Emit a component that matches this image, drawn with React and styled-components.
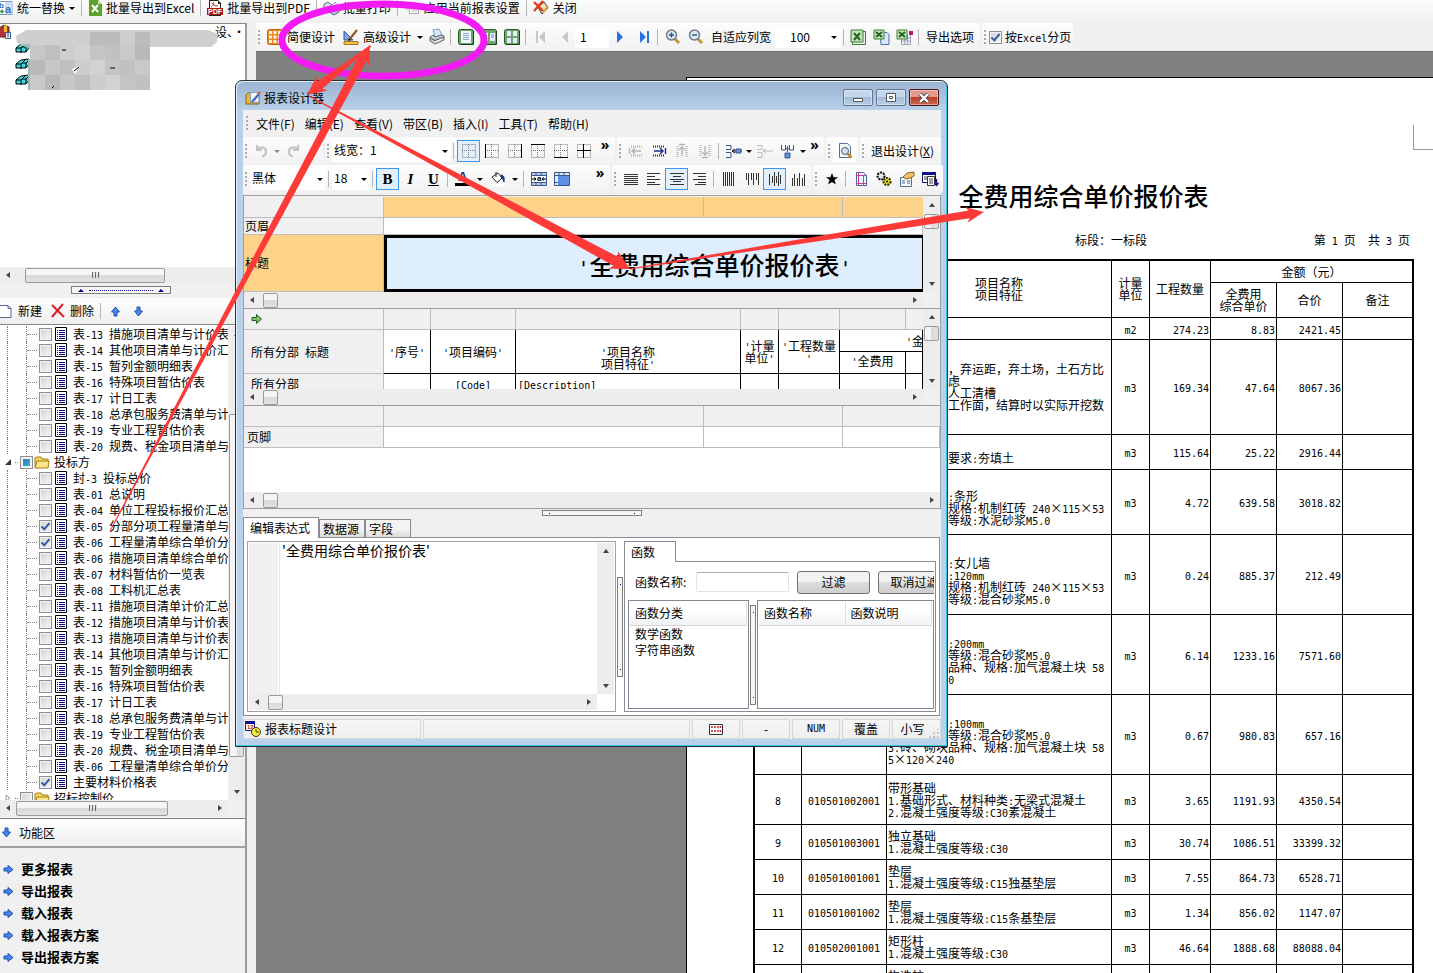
import React from 'react'
import styled, { createGlobalStyle, css } from 'styled-components'

const cjk = "'Noto Sans CJK SC', 'Open Sans', sans-serif"

const GlobalStyle = createGlobalStyle`
  *, *::before, *::after {
    box-sizing: border-box;
  }
  body {
    margin: 0;
    background: #f0f0f0;
    color: #000;
    font: 12px/16px ${cjk};
    overflow: hidden;
  }
  button, input, select, textarea {
    margin: 0;
    padding: 0;
    font: inherit;
    color: inherit;
  }
  ul {
    margin: 0;
    padding: 0;
    list-style: none;
  }
`

/* ---------- data ---------- */

const bidForms = [
  ['表-13 措施项目清单与计价表'],
  ['表-14 其他项目清单与计价汇'],
  ['表-15 暂列金额明细表'],
  ['表-16 特殊项目暂估价表'],
  ['表-17 计日工表'],
  ['表-18 总承包服务费清单与计'],
  ['表-19 专业工程暂估价表'],
  ['表-20 规费、税金项目清单与'],
]

const bidderForms = [
  ['封-3 投标总价'],
  ['表-01 总说明'],
  ['表-04 单位工程投标报价汇总'],
  ['表-05 分部分项工程量清单与', true],
  ['表-06 工程量清单综合单价分', true],
  ['表-06 措施项目清单综合单价'],
  ['表-07 材料暂估价一览表'],
  ['表-08 工料机汇总表'],
  ['表-11 措施项目清单计价汇总'],
  ['表-12 措施项目清单与计价表'],
  ...bidForms,
  ['表-06 工程量清单综合单价分'],
  ['主要材料价格表', true],
]

const reportRows = [
  { h: 22, no: '1', code: '010101001001', desc: '平整场地', unit: 'm2', n: ['274.23', '8.83', '2421.45'] },
  { h: 95, no: '2', code: '010101003001', desc: '挖沟槽土方\n2.土方外运，弃运距，弃土场，土石方比\n例各自行考虑\n3.开挖方式人工清槽\n4.不另计算工作面，结算时以实际开挖数\n量为准', unit: 'm3', n: ['169.34', '47.64', '8067.36'] },
  { h: 35, no: '3', code: '010103001001', desc: '回填方\n1.压实密度要求:夯填土', unit: 'm3', n: ['115.64', '25.22', '2916.44'] },
  { h: 65, no: '4', code: '010401001001', desc: '砖基础\n1.基础类型:条形\n2.品种型号规格:机制红砖 240×115×53\n3.砂浆强度等级:水泥砂浆M5.0', unit: 'm3', n: ['4.72', '639.58', '3018.82'] },
  { h: 80, no: '5', code: '010401003001', desc: '实心砖墙\n1.墙体类型:女儿墙\n2.墙体厚度:120mm\n3.品种型号规格:机制红砖 240×115×53\n4.砂浆强度等级:混合砂浆M5.0', unit: 'm3', n: ['0.24', '885.37', '212.49'] },
  { h: 80, no: '6', code: '010402001001', desc: '砌块墙\n1.墙体厚度:200mm\n2.砂浆强度等级:混合砂浆M5.0\n3.砖、砌块品种、规格:加气混凝土块 58\n5×120×240', unit: 'm3', n: ['6.14', '1233.16', '7571.60'] },
  { h: 80, no: '7', code: '010402001002', desc: '砌块墙\n1.墙体厚度:100mm\n2.砂浆强度等级:混合砂浆M5.0\n3.砖、砌块品种、规格:加气混凝土块 58\n5×120×240', unit: 'm3', n: ['0.67', '980.83', '657.16'] },
  { h: 50, no: '8', code: '010501002001', desc: '带形基础\n1.基础形式、材料种类:无梁式混凝土\n2.混凝土强度等级:C30素混凝土', unit: 'm3', n: ['3.65', '1191.93', '4350.54'] },
  { h: 35, no: '9', code: '010501003001', desc: '独立基础\n1.混凝土强度等级:C30', unit: 'm3', n: ['30.74', '1086.51', '33399.32'] },
  { h: 35, no: '10', code: '010501001001', desc: '垫层\n1.混凝土强度等级:C15独基垫层', unit: 'm3', n: ['7.55', '864.73', '6528.71'] },
  { h: 35, no: '11', code: '010501001002', desc: '垫层\n1.混凝土强度等级:C15条基垫层', unit: 'm3', n: ['1.34', '856.02', '1147.07'] },
  { h: 35, no: '12', code: '010502001001', desc: '矩形柱\n1.混凝土强度等级:C30', unit: 'm3', n: ['46.64', '1888.68', '88088.04'] },
  { h: 35, no: '13', code: '010502002001', desc: '构造柱\n1.混凝土强度等级:C25', unit: 'm3', n: ['5.31', '1902.11', '10100.20'] },
]

/* ---------- text ---------- */

const Mono = styled.span`
  font-family: 'DejaVu Sans Mono', monospace;
  font-size: ${p => p.$size || 10}px;
  line-height: 0;
`
const Times = styled.span`
  display: inline-block;
  width: 12px;
  text-align: center;
`

// latin runs take half the width of a han character
const Text = ({ children, size }) =>
  String(children).split(/([\x20-\x7e]+|×)/).map((part, i) => {
    if (part === '×') return <Times key={i}>×</Times>
    return i % 2 ? <Mono key={i} $size={size}>{part}</Mono> : part
  })

/* ---------- icons ---------- */

const Svg = styled.svg`
  display: block;
  flex: none;
  overflow: visible;
`
const IconText = styled.text`
  font: 700 ${p => p.$size}px/1 'Liberation Sans', sans-serif;
`
const Icon = ({ w = 16, h = 16, children, ...rest }) => (
  <Svg width={w} height={h} viewBox={`0 0 ${w} ${h}`} fill='none' aria-hidden='true' {...rest}>{children}</Svg>
)

const ReplaceIcon = () => (
  <Icon w={13}>
    <path d='M-3 1.500h15v13h-15z' fill='#fff' stroke='#7d9cc4' />
    <path d='M5 2h7v12H5z' fill='#cfe2f8' />
    <IconText $size={8} x='-1' y='8' fill='#2d6fc0'>b</IconText>
    <IconText $size={11} x='5' y='13' fill='#2d6fc0'>a</IconText>
    <path d='M0 11.500h4M2 9.500v4' stroke='#2c9b3a' strokeWidth='1.400' />
  </Icon>
)
const ExcelFileIcon = () => (
  <Icon w={14}>
    <path d='M1 0h9l4 4v12H1z' fill='#5ba32b' />
    <path d='M10 0v4h4z' fill='#c9e6a8' />
    <path d='M4 5l6 7M10 5l-6 7' stroke='#fff' strokeWidth='2' />
  </Icon>
)
const PdfIcon = () => (
  <Icon>
    <path d='M2 0h9l3 3v13H2z' fill='#2b2020' />
    <path d='M3 1h8v3h2v4H3z' fill='#fff' />
    <path d='M4 7c3-2 3-4 2-5M5 3c1 2 3 3 6 3' stroke='#c92a1c' />
    <path d='M0 8h16v7H0z' fill='#a8180c' />
    <IconText $size={7} x='1' y='14' fill='#fff'>PDF</IconText>
  </Icon>
)
const PrinterIcon = () => (
  <Icon>
    <path d='M4 1l6-1 3 6-7 2z' fill='#d8e8fb' stroke='#7e9cc9' />
    <path d='M1 8l3-2 2 2 7-2 2 1v4l-9 4-5-3z' fill='#c9ccd2' stroke='#666b74' />
    <path d='M1 9l5 2.500 9-3.500' stroke='#4d525b' />
    <path d='M6 13l7-3' stroke='#fff' />
  </Icon>
)
const PrintersIcon = () => (
  <Icon>
    <path d='M1 4l4-2 4 3v4l-4 2-4-3z' fill='#d3d8e2' stroke='#69748a' />
    <path d='M6 8l6-3 4 3v4l-5 3-5-3z' fill='#b9c8e2' stroke='#4f6185' />
    <path d='M8 6l4-4 3 4' fill='#eef5ff' stroke='#87a2cf' />
  </Icon>
)
const ApplyIcon = () => (
  <Icon>
    <path d='M5.500 4.500h9v9h-9z' fill='#fff' stroke='#aaa' />
    <path d='M2 5h5M1 9h4M7 9h6M7 11h6' stroke='#b6b6b6' />
    <path d='M2 2l6 3-6 3z' fill='#c8b0a8' />
  </Icon>
)
const CloseIcon = () => (
  <Icon>
    <path d='M5 7l6-5 4 6-6 6z' fill='#f4e0b8' stroke='#3a3a3a' />
    <path d='M10 13l5-7' stroke='#e1a03b' strokeWidth='2' />
    <path d='M1 2l9 9M10 1L1 11' stroke='#e33c1b' strokeWidth='2.400' />
  </Icon>
)
const SimpleIcon = () => (
  <Icon>
    <rect x='.5' y='.5' width='15' height='15' rx='2' fill='#e8862a' stroke='#c4610e' />
    <path d='M2 2h3v3H2zM6.500 2h3v3h-3zM11 2h3v3h-3zM2 6.500h3v3H2zM6.500 6.500h3v3h-3zM11 6.500h3v3h-3zM2 11h3v3H2zM6.500 11h3v3h-3zM11 11h3v3h-3z' fill='#fff3e0' />
  </Icon>
)
const AdvancedIcon = () => (
  <Icon>
    <path d='M1 2v9h9z' fill='#7fa4e8' stroke='#2c55a8' />
    <path d='M1 12.500h14v3H1z' fill='#f1c84b' stroke='#a8761d' />
    <path d='M6 11L14 1' stroke='#8e5b28' strokeWidth='2.200' />
    <path d='M5 12l1-3 2 2z' fill='#222' />
  </Icon>
)
const ViewIcon = ({ kind }) => (
  <Icon>
    <rect x='.5' y='.5' width='15' height='15' rx='2' fill='#6ea56a' stroke='#28592b' />
    <path d='M15.500 2v13.500H2' stroke='#173f1a' />
    {kind === 1 && <path d='M3 2h10v12H3z' fill='#f2f7ff' />}
    {kind === 1 && <path d='M5 4.500h6M5 6.500h6M5 8.500h6M5 10.500h6' stroke='#8da5c8' />}
    {kind === 2 && <path d='M2 4h5v8H2zM9 4h5v8H9z' fill='#e9f1ff' />}
    {kind === 2 && <path d='M10 6h3M10 8h3M3 6h3M3 8h3' stroke='#6d8bbf' />}
    {kind === 4 && <path d='M3 2h4v5H3zM9 2h4v5H9zM3 9h4v5H3zM9 9h4v5H9z' fill='#e3ecfb' />}
  </Icon>
)
const NavIcon = ({ dir, end, off }) => (
  <Icon>
    <g fill={off ? '#c6c8cb' : '#2e6fe0'} transform={dir < 0 ? 'matrix(-1 0 0 1 16 0)' : undefined}>
      <path d='M4 2l6 6-6 6z' />
      {end && <path d='M11 2h2v12h-2z' />}
    </g>
  </Icon>
)
const LensIcon = ({ plus }) => (
  <Icon>
    <path d='M9 9l5 5' stroke='#c9962b' strokeWidth='3' />
    <circle cx='6.500' cy='6' r='5' fill='#dbe7f5' stroke='#6b7685' strokeWidth='1.400' />
    <path d={plus ? 'M4 6h5M6.500 3.500v5' : 'M4 6h5'} stroke='#34517d' strokeWidth='1.400' />
  </Icon>
)
const ExcelIcon = ({ kind }) => (
  <Icon>
    {kind === 1 && <path d='M1.500 2.500h13v13h-13z' fill='#e9f5e6' stroke='#3a7d33' />}
    {kind === 2 && <path d='M6 3.500h7l2 2v10H7z' fill='#dbe8fa' stroke='#4a6ea8' />}
    {kind === 3 && <path d='M4.500 8v7.500h9V6M4.500 12h9M7.500 8v7M10.500 6v9M8 9h6' stroke='#9ba3bd' />}
    {kind === 3 && <path d='M12 2h4v4h-4z' fill='#c2186b' />}
    <path d={kind === 1 ? 'M0 1h12v12H0z' : 'M0 1h10v9H0z'} fill='#c8e2c3' stroke='#3a7d33' />
    <path d={kind === 1 ? 'M3 4l6 7M9 4l-6 7' : 'M2 3l6 5M8 3L2 8'} stroke='#23661e' strokeWidth='2' />
  </Icon>
)
const DesignerIcon = () => (
  <Icon>
    <path d='M1 5l2-2h3v2h8v9H1z' fill='#e8b73a' stroke='#8b6411' />
    <path d='M5 3l6-1 3 3v7l-8 1z' fill='#f4f8ff' stroke='#8192b5' />
    <path d='M7 12l7-8' stroke='#3868b8' strokeWidth='2.200' />
    <path d='M13 4l2-2' stroke='#d5572a' strokeWidth='2.400' />
  </Icon>
)
const ArrowIcon = ({ turn = 0 }) => (
  <Icon w={11} h={11}>
    <path transform={`rotate(${turn} 5.500 5.500)`} d='M1 4h4V1.500l5 4-5 4V7H1z' fill='#4a86ec' stroke='#1f4fae' />
  </Icon>
)
const GreenArrow = () => (
  <Icon w={12} h={12}>
    <path d='M1 4.500h4.500V1.500l5 4.500-5 4.500v-3H1z' fill='#7cc06a' stroke='#1f5e1c' />
  </Icon>
)
const NewIcon = () => (
  <Icon w={14}>
    <path d='M-1 2.500h9l3 3v9H-1z' fill='#fdfeff' stroke='#4d6c95' />
    <path d='M8 2.500v3h3' stroke='#4d6c95' />
  </Icon>
)
const DeleteIcon = () => (
  <Icon>
    <path d='M2 2l12 12M13 1L2 14' stroke='#dc1f28' strokeWidth='2' />
  </Icon>
)
const FormIcon = () => (
  <Icon w={12} h={14}>
    <path d='M.5.500h11v13H.5z' fill='#fff' stroke='#000' />
    <path d='M2 3.500h1M4 3.500h6M2 5.500h1M4 5.500h6M2 7.500h1M4 7.500h6M2 9.500h1M4 9.500h6M2 11.500h1M4 11.500h6' stroke='#00008b' />
  </Icon>
)
const FolderIcon = () => (
  <Icon h={13}>
    <path d='M1 11V2l2-1h4l1 2h6v8z' fill='#f6d667' stroke='#a67c12' />
    <path d='M1 12l2-7h12l-1 7z' fill='#fce48a' stroke='#a67c12' />
  </Icon>
)
const CubeIcon = () => (
  <Icon w={15} h={12}>
    <path d='M1 6l5-4 8-1v5l-3 4H1z' fill='#3fd8dd' stroke='#000' />
    <path d='M1 6h5v5M6 6l4-4M7 5h4v5M11 5l3-3' stroke='#000' />
  </Icon>
)
const RootIcon = () => (
  <Icon>
    <path d='M-1 4l5-3 5 2v10H-1z' fill='#b0323c' stroke='#4b2a2a' />
    <path d='M4 1l3 1v6H4z' fill='#f2b82e' />
    <path d='M5.500 8.500h5v6h-5z' fill='#dfe8f6' stroke='#3d5c8c' />
    <path d='M7 10h2M7 12h2' stroke='#3d5c8c' />
  </Icon>
)
const UndoIcon = ({ flip }) => (
  <Icon>
    <path transform={flip ? 'matrix(-1 0 0 1 16 0)' : undefined} d='M3 2v5h5M3.500 6.500C7 3 12 4 12 8.500c0 3-2 4.500-4 5' stroke='#c3c5c8' strokeWidth='2.200' />
  </Icon>
)
const BorderIcon = ({ line }) => (
  <Icon w={14} h={14}>
    <path d='M.5.500h13v13H.5zM6.500 0v14M0 6.500h14' stroke='#777' strokeDasharray='1 1' />
    {line && <path d={line} stroke='#000' />}
  </Icon>
)
const InsertIcon = ({ turn, on }) => (
  <Icon w={14} h={14}>
    <g transform={`rotate(${turn} 7 7)`} stroke={on ? '#1a2a8c' : '#b3b3b3'}>
      <path d='M1 2.500h12M1 11.500h12' strokeDasharray='1 1' strokeWidth='2' />
      <path d='M2 7h9M8 4l3 3-3 3M13.500 4v6' strokeWidth='1.400' />
    </g>
  </Icon>
)
const SplitIcon = ({ kind }) => (
  <Icon w={17} h={15}>
    {kind < 3 && <path d='M1 1.500h5v4H1M1 8.500h5v5H1' stroke={kind === 1 ? '#39598f' : '#bbb'} />}
    {kind < 3 && <path d='M7 7h10M10 5L7 7l3 2' stroke={kind === 1 ? '#000' : '#bbb'} />}
    {kind === 1 && <path d='M11 5h5v4h-5z' fill='#6d94d8' stroke='#39598f' />}
    {kind === 3 && <path d='M2.500 1v5h4V1M10.500 1v5h4V1M8.500 2v6M6 6l2.500-2L11 6' stroke='#39598f' />}
    {kind === 3 && <path d='M6 9h5v5H6z' fill='#5f8bd8' stroke='#39598f' />}
  </Icon>
)
const PreviewIcon = () => (
  <Icon>
    <path d='M2.500.500h8l3 3v11h-11z' fill='#f4f8fd' stroke='#53719a' />
    <circle cx='8' cy='8' r='3.500' fill='#cfe0f2' stroke='#4e5d70' />
    <path d='M10.500 10.500l4 4' stroke='#c98a26' strokeWidth='2.600' />
  </Icon>
)
const ColorIcon = () => (
  <Icon>
    <IconText $size={13} x='3' y='10' fill='#1b2a8a'>A</IconText>
    <path d='M0 12h16v3H0z' fill='#000' />
  </Icon>
)
const FillIcon = () => (
  <Icon>
    <path d='M2 6l6-4 4 5-5 4.500z' fill='#fff' stroke='#222' />
    <path d='M6 1v5' stroke='#222' />
    <path d='M11 4c3 0 3.500 3 3 7-1-2-1-3-2-4z' fill='#14309a' stroke='#14309a' />
    <path d='M0 12.500h15v3H0z' fill='#fff' />
  </Icon>
)
const CellIcon = ({ merged }) => (
  <Icon>
    <path d='M.5 1.500h15v13H.5z' fill={merged ? '#dfe9fa' : '#b5c9ea'} stroke='#3c5787' />
    <path d='M0 4.500h16M0 11.500h16M5 1v3M10 1v3M5 12v3M10 12v3' stroke='#3c5787' />
    {merged ? <path d='M4 5h11v9H4z' fill='#5d8fe6' /> : <path d='M1 5h14v6H1z' fill='#fff' />}
    {!merged && <path d='M1 8h4M3 6.500L5 8 3 9.500M15 8h-4M13 6.500L11 8l2 1.500' stroke='#000' />}
    {!merged && <IconText $size={8} x='6' y='10' fill='#000'>a</IconText>}
  </Icon>
)
const rowLines = ['M1 3.500h14M1 5.500h14M1 7.500h14M1 9.500h14M1 11.500h14M1 13.500h14', 'M1 2.500h13M1 5.500h8M1 8.500h13M1 11.500h8M1 13.500h13', 'M1 2.500h14M4 5.500h8M1 8.500h14M4 10.500h8M1 13.500h14', 'M1 2.500h13M6 5.500h8M1 8.500h13M6 11.500h8M3 13.500h11']
const colLines = ['M2.500 1v14M4.500 1v14M6.500 1v14M8.500 1v14M10.500 1v14M12.500 1v14', 'M2.500 2v7M4.500 2v12M7.500 2v7M9.500 2v12M12.500 2v7M14.500 2v12', 'M2.500 3v11M5.500 5v7M7.500 1v14M9.500 5v7M11.500 1v14M13.500 4v9', 'M2.500 7v8M4.500 3v12M7.500 7v8M9.500 2v13M12.500 7v8M14.500 3v12']
const LinesIcon = ({ d }) => <Icon><path d={d} stroke='#333' /></Icon>
const StarIcon = () => (
  <Icon><path d='M8 2l1.600 4.300H14l-3.500 2.700 1.300 4.500L8 11l-3.800 2.500L5.500 9 2 6.300h4.400z' fill='#000' /></Icon>
)
const PageIcon = () => (
  <Icon>
    <path d='M3.500 1.500h7l3 3v10h-10z' fill='#eef4fc' stroke='#4b6593' />
    <path d='M5.500 1v14M10.500 4v11M3 4.500h10M3 12.500h10' stroke='#cc38a6' />
  </Icon>
)
const GearsIcon = () => (
  <Icon>
    <circle cx='5' cy='5' r='3.500' fill='#e8e8e8' stroke='#000' strokeWidth='2' strokeDasharray='2 1' />
    <circle cx='11' cy='10.500' r='3.500' fill='#e6e22a' stroke='#3c3a00' strokeWidth='2.200' strokeDasharray='2 1' />
    <circle cx='11' cy='10.500' r='1' fill='#000' />
  </Icon>
)
const HandIcon = () => (
  <Icon>
    <path d='M1.500 6.500h11v9h-11z' fill='#f2f6fc' stroke='#506a92' />
    <path d='M3 10h3M3 12h3M8 10h3M8 12h3' stroke='#506a92' />
    <path d='M4 6l4-4 7-1v4l-4 2-4 1z' fill='#edc271' stroke='#8a6a18' />
  </Icon>
)
const ListIcon = () => (
  <Icon>
    <path d='M.5 1.500h13v10H.5z' fill='#fff' stroke='#10106e' />
    <path d='M0 1h14v3H0z' fill='#10108e' />
    <path d='M5.500 5.500h7v9h-7z' fill='#fff' stroke='#333' />
    <path d='M2 6h3M2 8h3M7 8h4M7 10h4M7 12h4' stroke='#444' />
    <path d='M14.500 8v6M12.500 12l2 2.500 2-2.500' stroke='#10108e' strokeWidth='1.400' />
  </Icon>
)
const ClockIcon = () => (
  <Icon>
    <path d='M.5.500h9v9h-9z' fill='#fff' stroke='#10108e' />
    <path d='M0 0h10v3H0z' fill='#10108e' />
    <IconText $size={6} x='2' y='8' fill='#c01818'>12</IconText>
    <circle cx='11' cy='11' r='4.500' fill='#f7f04a' stroke='#3b3600' />
    <path d='M11 8v3h3' stroke='#3b3600' />
  </Icon>
)
const KeysIcon = () => (
  <Icon w={14} h={11}>
    <path d='M.5.500h13v10H.5z' fill='#fff' stroke='#333' />
    <path d='M3 2v3M6 2v3M9 2v3M11.500 2v3M3 6v3M6 6v3M9 6v3M11.500 6v3' stroke='#d12d2d' strokeWidth='1.600' strokeDasharray='2 1' />
  </Icon>
)

/* ---------- shared controls ---------- */

const Bar = styled.div`
  display: flex;
  align-items: stretch;
  gap: 2px;
  height: ${p => p.$h}px;
`
const Group = styled.div`
  display: flex;
  align-items: center;
  flex: ${p => (p.$grow ? '1' : 'none')};
  width: ${p => (p.$w ? `${p.$w}px` : 'auto')};
  padding-right: 2px;
  border-radius: 2px;
  background: linear-gradient(#fdfdfd, #f1f1f1);
`
const Grip = styled.span`
  flex: none;
  width: 5px;
  height: 15px;
  margin-left: 2px;
  background: radial-gradient(circle at 1px 1px, #a9a9a9 1px, transparent 1px) 0 0 / 5px 4px;
`
const Sep = styled.span`
  flex: none;
  width: 1px;
  height: 16px;
  margin: 0 3px 0 2px;
  background: #b4b4b4;
`
const Tool = styled.button`
  display: flex;
  align-items: center;
  justify-content: center;
  gap: 4px;
  flex: none;
  height: 22px;
  width: ${p => (p.$text ? 'auto' : '23px')};
  padding: 0 ${p => (p.$text ? '4px' : 0)};
  border: 0;
  background: none;
  white-space: nowrap;
  ${p => p.$on && css`
    background: #e4effc;
    border: 1px solid #3c97f2;
  `}
  ${p => p.$white && css`
    background: #fff;
  `}
`
const Caret = styled.span`
  flex: none;
  width: ${p => p.$w || 8}px;
  &::before {
    content: '';
    display: block;
    width: 5px;
    margin: 0 auto;
    border: solid transparent;
    border-width: 3px 3px 0;
    border-top-color: ${p => (p.$off ? '#888' : '#000')};
  }
`
const Chevron = styled.button`
  align-self: flex-start;
  width: 16px;
  height: 16px;
  margin-left: auto;
  border: 0;
  background: none;
  font: 700 14px/12px 'Open Sans', sans-serif;
`
const Combo = styled.div`
  display: flex;
  align-items: center;
  flex: none;
  width: ${p => p.$w}px;
  height: 22px;
  background: #fff;
  select, input {
    flex: 1;
    min-width: 0;
    height: 18px;
    padding: 0 0 2px ${p => p.$pad || 2}px;
    border: 0;
    outline: 0;
    background: none;
    appearance: none;
    line-height: 16px;
  }
`
const Check = styled.input`
  appearance: none;
  position: relative;
  flex: none;
  width: 13px;
  height: 13px;
  border: 1px solid #8e8f8f;
  background: linear-gradient(135deg, #cfd2d6, #f6f6f6);
  box-shadow: inset 0 0 0 1px #f4f4f4;
  ${p => p.$partial && css`
    background: linear-gradient(135deg, #2b6fa8, #3cbbe6);
    box-shadow: inset 0 0 0 2px #f4f4f4;
  `}
  &:checked::after {
    content: '';
    position: absolute;
    left: 3px;
    top: 0;
    width: 5px;
    height: 9px;
    border: solid #3d5a9e;
    border-width: 0 2px 2px 0;
    transform: rotate(40deg);
  }
`

const Track = styled.div`
  display: flex;
  flex: none;
  align-items: center;
  flex-direction: ${p => (p.$v ? 'column' : 'row')};
  ${p => (p.$v ? 'width: 17px;' : 'height: 16px;')}
  background: #ededed;
`
const TrackArrow = styled.button`
  display: flex;
  align-items: center;
  justify-content: center;
  flex: none;
  width: 16px;
  height: 16px;
  border: 0;
  background: none;
  svg {
    transform: rotate(${p => p.$turn}deg);
  }
`
const Thumb = styled.span`
  display: flex;
  align-items: center;
  justify-content: center;
  flex: none;
  gap: 2px;
  border: 1px solid #9a9a9a;
  border-radius: 2px;
  background: linear-gradient(${p => (p.$v ? '90deg, ' : '')}#f5f5f5 50%, #d9d9dc 50%, #e2e2e4);
  ${p => (p.$v
    ? `width: 15px; height: ${p.$len}px; margin-top: ${p.$at}px;`
    : `height: 15px; width: ${p.$len}px; margin-left: ${p.$at}px;`)}
  i {
    width: 1px;
    height: 6px;
    background: #666;
    box-shadow: 1px 0 #ddd;
  }
`
const Spring = styled.span`
  flex: 1;
`
const ArrowHead = () => <Icon w={6} h={6}><path d='M5 0v6L1 3z' fill='#444' /></Icon>
const Scroll = ({ v, at = 0, len, ribs }) => (
  <Track $v={v}>
    <TrackArrow aria-label='上一' $turn={v ? 90 : 0}><ArrowHead /></TrackArrow>
    {len && <Thumb $v={v} $at={at} $len={len}>{ribs && <><i /><i /><i /></>}</Thumb>}
    <Spring />
    <TrackArrow aria-label='下一' $turn={v ? 270 : 180}><ArrowHead /></TrackArrow>
  </Track>
)

const Handle = styled.div`
  display: flex;
  flex-direction: ${p => (p.$v ? 'column' : 'row')};
  align-items: center;
  justify-content: space-between;
  flex: none;
  align-self: center;
  width: ${p => (p.$v ? 6 : 100)}px;
  height: ${p => (p.$v ? 100 : p.$h || 6)}px;
  margin: ${p => (p.$v ? '0 1px' : '0 auto')};
  padding: ${p => (p.$v ? '6px 0' : '0 6px')};
  border: 1px solid #7e7e7e;
  background: #f6f6f6;
  i {
    width: 1px;
    height: 1px;
    background: #00008b;
  }
  b {
    border: solid transparent;
    border-width: 0 3px 3px;
    border-bottom-color: #00008b;
  }
  u {
    flex: 1;
    margin: 0 5px;
    border-top: 1px dotted #00008b;
  }
`

/* ---------- page frame ---------- */

const Page = styled.div`
  position: relative;
  display: flex;
  flex-direction: column;
  height: 100vh;
  overflow: hidden;
`
const TopBar = styled.header`
  display: flex;
  align-items: center;
  flex: none;
  height: 23px;
  padding-bottom: 7px;
  background: linear-gradient(#fcfcfc, #f0f0f0);
  > span {
    margin: 0 2px;
  }
`
const Body = styled.div`
  display: flex;
  flex: 1;
  min-height: 0;
`
const Sidebar = styled.aside`
  display: flex;
  flex-direction: column;
  flex: none;
  width: 247px;
  border-right: 2px solid #9b9b9b;
  overflow: hidden;
`
const Main = styled.main`
  display: flex;
  flex-direction: column;
  flex: 1;
  min-width: 0;
  margin-left: 9px;
`
const ProjectTree = styled.div`
  position: relative;
  flex: none;
  height: 244px;
  border-top: 1px solid #828790;
  background: #fff;
`
const ProjectRow = styled.div`
  display: flex;
  align-items: center;
  justify-content: space-between;
  height: 16px;
  padding-left: ${p => p.$pad}px;
  white-space: nowrap;
`
const Mosaic = styled.svg`
  position: absolute;
  left: 14px;
  top: 2px;
`
const SplitSide = styled.div`
  height: 13px;
  padding: 3px 4px 0 0;
`
const SideTools = styled.div`
  display: flex;
  align-items: center;
  flex: none;
  height: 27px;
  margin-top: 2px;
  background: linear-gradient(#fdfdfd, #efefef);
  border-bottom: 1px solid #828790;
`
const FormTree = styled.div`
  display: flex;
  flex: none;
  height: 475px;
  padding-top: 1px;
  background: #fff;
  overflow: hidden;
  ul {
    flex: 1;
    min-width: 0;
    overflow: hidden;
  }
`
const FormRow = styled.li`
  display: flex;
  align-items: center;
  height: 16px;
  label {
    white-space: nowrap;
    margin-left: ${p => (p.$folder ? 4 : 6)}px;
  }
  input {
    margin-right: ${p => (p.$folder ? 1 : 3)}px;
  }
`
const Guide = styled.span`
  flex: none;
  align-self: stretch;
  width: ${p => p.$w}px;
  border-right: 1px dotted #808080;
`
const Dash = styled.span`
  flex: none;
  width: ${p => p.$w}px;
  margin-right: 2px;
  border-top: 1px dotted #808080;
`
const Expander = styled.span`
  flex: none;
  width: 10px;
  height: 6px;
  margin: 0 1px 0 4px;
  svg { margin-left: 1px; }
`
const FuncHead = styled.h2`
  display: flex;
  align-items: center;
  gap: 7px;
  flex: none;
  height: 30px;
  margin: 2px 0 0;
  padding-left: 1px;
  font-size: 12px;
  font-weight: 400;
  background: linear-gradient(#fdfdfd, #f0f0f0);
  border-top: 1px solid #828790;
  border-bottom: 2px solid #a0a0a0;
`
const FuncList = styled.ul`
  && { padding: 10px 0 0 3px; }
  a {
    display: flex;
    align-items: center;
    gap: 7px;
    height: 22px;
    color: #000;
    font-size: 13px;
    font-weight: 700;
    text-decoration: none;
  }
`
const MainBar = styled(Bar)`
  flex: none;
  background: #f0f0f0;
  border-bottom: 1px solid #6e6e6e;
`
const PagingLabel = styled.label`
  margin-left: 3px;
  white-space: nowrap;
`
const Canvas = styled.div`
  flex: 1;
  min-height: 0;
  padding: 25px 0 0 430px;
  background: #808080;
  overflow: hidden;
`
const Paper = styled.article`
  position: relative;
  height: 1200px;
  padding: 102px 0 0 66px;
  border: solid #000;
  border-width: 1px 0 0 1px;
  background: #fff;
`
const Corner = styled.span`
  position: absolute;
  left: 726px;
  top: 47px;
  width: 25px;
  height: 25px;
  border: solid #999;
  border-width: 0 0 1px 1px;
`
const Title = styled.h1`
  width: 661px;
  margin: 0;
  font-size: 25px;
  font-weight: 500;
  line-height: 30px;
  text-align: center;
`
const SubLine = styled.div`
  display: grid;
  grid-template-columns: 322px 1fr auto;
  width: 661px;
  margin: 22px 0 11px;
  padding-right: 4px;
  white-space: pre;
`
const Report = styled.table`
  table-layout: fixed;
  width: 661px;
  border: 2px solid #000;
  border-spacing: 0;
  line-height: 12px;
  th, td {
    padding: 0 1px;
    font-weight: 400;
    text-align: center;
    border: solid #000;
    border-width: 0 1px 1px 0;
    white-space: pre;
    overflow: hidden;
  }
  tr > :last-child { border-right: 0; }
`
const NumCell = styled.td`
  && { text-align: right; }
`
const DescCell = styled.td`
  && { text-align: left; }
`

/* ---------- designer window ---------- */

const Window = styled.section`
  position: absolute;
  left: 235px;
  top: 80px;
  width: 713px;
  padding: 0 6px 7px 7px;
  border: 1px solid #2a2f36;
  border-radius: 7px 7px 0 0;
  background: linear-gradient(#99b4d1, #b9d1ea 30px);
  box-shadow: inset -1px -1px #35c6e6, inset 1px 1px #e3eefa;
`
const TitleBar = styled.header`
  display: flex;
  align-items: center;
  height: 29px;
  padding: 4px 2px 0 2px;
  gap: 3px;
  h2 {
    flex: 1;
    margin: 0;
    font-size: 12px;
    font-weight: 400;
  }
`
const WinButton = styled.button`
  display: flex;
  align-items: center;
  justify-content: center;
  width: 30px;
  height: 17px;
  border: 1px solid ${p => (p.$close ? '#4b1620' : '#62748d')};
  border-radius: 2px;
  background: ${p => (p.$close
    ? 'linear-gradient(#e09a8c 45%, #b83c26 50%, #cf6a4c)'
    : 'linear-gradient(#c4d6ea 45%, #a3bbd6 50%, #b9cfe6)')};
  box-shadow: inset 0 0 0 1px rgba(255, 255, 255, .4);
`
const Client = styled.div`
  background: #f0f0f0;
`
const Menu = styled.nav`
  display: flex;
  align-items: center;
  height: 27px;
  padding-left: 1px;
  button {
    padding: 0 5px;
    border: 0;
    background: none;
  }
`
const Bands = styled.div`
  margin-top: 2px;
  padding-top: 1px;
  border: 1px solid #a0a0a0;
  border-bottom: 0;
`
const Band = styled.div`
  border-bottom: 1px solid #9c9c9c;
`
const BandRow = styled.div`
  display: flex;
  height: ${p => p.$h}px;
  background: ${p => (p.$white ? '#fff' : 'none')};
  overflow: hidden;
`
const BandScroll = styled.div`
  padding-right: ${p => (p.$inset ? 17 : 0)}px;
`
const BandTable = styled.table`
  flex: 1;
  min-width: 0;
  width: 678px;
  table-layout: fixed;
  border-spacing: 0;
  line-height: 12px;
  td, th {
    padding: 0;
    font-weight: 400;
    white-space: pre;
    overflow: hidden;
    text-align: center;
    border: solid #bdbdbd;
    border-width: 0 1px 1px 0;
    background: #fff;
  }
  th {
    background: #f0f0f0;
  }
  tr > :first-child {
    text-align: left;
    padding-left: ${p => p.$pad || 1}px;
  }
  thead tr > :last-child { border-right: 0; }
`
const PlainTable = styled(BandTable)`
  align-self: flex-start;
`
const Gold = styled.th`
  && { background: #ffd28a; }
`
const Selected = styled.td`
  && {
    padding-left: 120px;
    border: solid #000;
    border-width: 3px 1px 3px 3px;
    background: #dfeeff;
    font-size: 25px;
    font-weight: 500;
    line-height: 30px;
  }
`
const Ink = styled.td`
  && {
    border-color: #000;
    text-align: ${p => p.$align || 'center'};
    vertical-align: ${p => p.$valign || 'middle'};
    padding-left: ${p => p.$pad || 0}px;
    padding-top: ${p => p.$top || 0}px;
  }
`
const InkFirst = styled.td`
  &&& {
    padding: 0 0 4px;
    border-color: #000;
    text-align: center;
  }
`
const RowHead = styled.th`
  && {
    padding-top: 4px;
    vertical-align: top;
  }
`
const Glyph = styled.span`
  font-family: 'Liberation Serif', serif;
  font-size: 15px;
  font-weight: 700;
  font-style: ${p => (p.$italic ? 'italic' : 'normal')};
  text-decoration: ${p => (p.$line ? 'underline' : 'none')};
`
const SplitRow = styled.div`
  height: 7px;
  padding-top: 1px;
`
const Tabs = styled.div`
  display: flex;
  align-items: flex-end;
  height: 21px;
`
const Tab = styled.button`
  width: ${p => p.$w}px;
  height: ${p => (p.$on ? 21 : 18)}px;
  margin-bottom: ${p => (p.$on ? -1 : 0)}px;
  padding-left: ${p => (p.$on ? 6 : 3)}px;
  border: 1px solid #898c95;
  border-bottom: 0;
  background: ${p => (p.$on ? '#fff' : 'linear-gradient(#f4f4f4 50%, #dcdcdc)')};
  line-height: 16px;
  text-align: left;
  white-space: nowrap;
  z-index: 1;
`
const TabPanel = styled.div`
  display: flex;
  height: 179px;
  padding: 3px;
  margin-right: 1px;
  border: 1px solid #898c95;
  background: #fff;
`
const Editor = styled.div`
  display: flex;
  flex-direction: column;
  flex: none;
  width: 369px;
  border: 1px solid #a0a0a0;
  padding: 1px;
`
const EditorBody = styled.div`
  display: flex;
  flex: 1;
  min-height: 0;
  textarea {
    flex: 1;
    min-width: 0;
    margin-left: 1px;
    padding-left: 2px;
    border: 0;
    border-left: 1px solid #e6e6e6;
    outline: 0;
    resize: none;
    overflow: hidden;
    font-size: 14px;
    line-height: 14px;
  }
`
const Gutter = styled.span`
  width: 29px;
  background: #f0f0f0;
`
const Side = styled.div`
  display: flex;
  flex-direction: column;
  flex: 1;
  min-width: 0;
`
const SidePanel = styled.div`
  flex: 1;
  padding: 8px 1px 2px 3px;
  border: 1px solid #898c95;
  overflow: hidden;
`
const Filter = styled.form`
  display: flex;
  align-items: center;
  height: 24px;
  padding-left: 7px;
  overflow: hidden;
  white-space: nowrap;
  label {
    flex: none;
    width: 61px;
  }
  input {
    flex: none;
    width: 93px;
    height: 20px;
    border: 1px solid #e2e3ea;
    border-top-color: #abadb3;
    border-radius: 2px;
  }
  button {
    flex: none;
    width: 73px;
    height: 23px;
    margin-left: 8px;
    border: 1px solid #707070;
    border-radius: 3px;
    background: linear-gradient(#f2f2f2 50%, #dcdcdc 50%, #cfcfcf);
    line-height: 18px;
  }
`
const Lists = styled.div`
  display: flex;
  height: 109px;
  margin-top: 6px;
`
const ListBox = styled.div`
  flex: ${p => (p.$w ? 'none' : 1)};
  width: ${p => (p.$w ? `${p.$w}px` : 'auto')};
  padding: 1px;
  border: 1px solid #828790;
  overflow: hidden;
  white-space: nowrap;
  li {
    padding-left: 5px;
  }
`
const ListHead = styled.div`
  display: flex;
  height: 24px;
  border-bottom: 1px solid #d5d5d5;
  background: linear-gradient(#fff 40%, #f1f2f4);
  span {
    flex: 1;
    padding-left: 5px;
    line-height: 22px;
    border-right: 1px solid #dedfe1;
  }
`
const Status = styled.footer`
  display: flex;
  gap: 2px;
  height: 23px;
  padding-top: 3px;
`
const StatusCell = styled.div`
  display: flex;
  align-items: center;
  justify-content: ${p => (p.$left ? 'flex-start' : 'center')};
  gap: 4px;
  flex: ${p => (p.$w ? 'none' : 1)};
  width: ${p => (p.$w ? `${p.$w}px` : 'auto')};
  padding-left: ${p => (p.$left ? 1 : 0)}px;
  border: 1px solid #d7d7d7;
  background: linear-gradient(#f6f6f6, #eee);
`
const SizeGrip = styled.span`
  align-self: flex-end;
  width: 10px;
  height: 10px;
  margin-right: -6px;
  background: radial-gradient(circle at 1px 1px, #b5b5b5 1px, transparent 1px) 0 0 / 4px 4px;
  clip-path: polygon(100% 0, 100% 100%, 0 100%);
`
const Marks = styled.svg`
  position: absolute;
  left: 0;
  top: 0;
  pointer-events: none;
`

const ReportDesigner = () => (
  <Window>
    <TitleBar>
      <DesignerIcon />
      <h2>报表设计器</h2>
      <WinButton aria-label='最小化'><Icon w={12} h={11}><path d='M1.500 6.500h9v3h-9z' fill='#fff' stroke='#555' /></Icon></WinButton>
      <WinButton aria-label='最大化'><Icon w={12} h={11}><path d='M1.500 1.500h9v8h-9zM4.500 4.500h3v2h-3z' fill='#fff' stroke='#4a5566' /></Icon></WinButton>
      <WinButton $close aria-label='关闭'>
        <Icon w={12} h={10}>
          <path d='M2 1l8 8M10 1L2 9' stroke='#55414a' strokeWidth='4' />
          <path d='M2 1l8 8M10 1L2 9' stroke='#fff' strokeWidth='2.400' />
        </Icon>
      </WinButton>
    </TitleBar>
    <Client>
      <Menu>
        <Grip />
        {['文件(F)', '编辑(E)', '查看(V)', '带区(B)', '插入(I)', '工具(T)', '帮助(H)'].map(m => <button key={m}>{m}</button>)}
      </Menu>
      <Bar $h={28}>
        <Group $w={80}>
          <Grip />
          <Tool aria-label='撤销'><UndoIcon /></Tool><Caret $off />
          <Tool aria-label='重做'><UndoIcon flip /></Tool>
        </Group>
        <Group $w={290}>
          <Grip />
          <Combo $w={119}><select aria-label='线宽'><option>线宽：1</option></select><Caret $w={12} /></Combo>
          <Sep />
          <Tool $on aria-label='无边框'><BorderIcon /></Tool>
          <Tool aria-label='左边框'><BorderIcon line='M.5 0v14' /></Tool>
          <Tool aria-label='右边框'><BorderIcon line='M13.500 0v14' /></Tool>
          <Tool aria-label='上边框'><BorderIcon line='M0 .5h14' /></Tool>
          <Tool aria-label='下边框'><BorderIcon line='M0 13.500h14' /></Tool>
          <Tool aria-label='内边框'><BorderIcon line='M0 6.500h14M6.500 0v14' /></Tool>
          <Chevron>»</Chevron>
        </Group>
        <Group $w={207}>
          <Grip />
          <Tool aria-label='插入列左'><InsertIcon turn={180} /></Tool>
          <Tool aria-label='插入列右'><InsertIcon turn={0} on /></Tool>
          <Tool aria-label='插入行上'><InsertIcon turn={270} /></Tool>
          <Tool aria-label='插入行下'><InsertIcon turn={90} /></Tool>
          <Sep />
          <Tool aria-label='合并列'><SplitIcon kind={1} /></Tool><Caret />
          <Tool aria-label='拆分列'><SplitIcon kind={2} /></Tool>
          <Tool aria-label='合并行'><SplitIcon kind={3} /></Tool><Caret />
          <Chevron>»</Chevron>
        </Group>
        <Group>
          <Grip />
          <Tool $white aria-label='预览'><PreviewIcon /></Tool>
        </Group>
        <Group $grow>
          <Grip />
          <Tool $text><span>退出设计(<u>X</u>)</span></Tool>
        </Group>
      </Bar>
      <Bar $h={28}>
        <Group $w={367}>
          <Grip />
          <Combo $w={76}><select aria-label='字体'><option>黑体</option></select><Caret $w={12} /></Combo>
          <Sep />
          <Combo $w={38}><select aria-label='字号'><option>18</option></select><Caret $w={12} /></Combo>
          <Sep />
          <Tool $on aria-label='粗体'><Glyph>B</Glyph></Tool>
          <Tool aria-label='斜体'><Glyph $italic>I</Glyph></Tool>
          <Tool aria-label='下划线'><Glyph $line>U</Glyph></Tool>
          <Sep />
          <Tool aria-label='字体颜色'><ColorIcon /></Tool><Caret $w={12} />
          <Tool aria-label='填充颜色'><FillIcon /></Tool><Caret $w={12} />
          <Sep />
          <Tool aria-label='合并居中'><CellIcon /></Tool>
          <Tool aria-label='合并单元格'><CellIcon merged /></Tool>
          <Chevron>»</Chevron>
        </Group>
        <Group>
          <Grip />
          {rowLines.map((d, i) => <Tool key={d} $on={i === 2} aria-label='水平对齐'><LinesIcon d={d} /></Tool>)}
          <Sep />
          {colLines.map((d, i) => <Tool key={d} $on={i === 2} aria-label='垂直对齐'><LinesIcon d={d} /></Tool>)}
        </Group>
        <Group $grow>
          <Grip />
          <Tool aria-label='收藏'><StarIcon /></Tool>
          <Sep />
          <Tool aria-label='页面'><PageIcon /></Tool>
          <Tool aria-label='设置'><GearsIcon /></Tool>
          <Tool aria-label='属性'><HandIcon /></Tool>
          <Tool aria-label='列表'><ListIcon /></Tool>
        </Group>
      </Bar>

      <Bands>
        <Band>
          <BandRow $h={95}>
            <BandTable>
              <colgroup><col width='140' /><col width='320' /><col width='139' /><col /></colgroup>
              <thead><tr height='21'><th /><Gold /><Gold /><Gold /></tr></thead>
              <tbody>
                <tr height='17'><th>页眉</th><td colSpan='3' /></tr>
                <tr height='57'><Gold>标题</Gold><Selected colSpan='3'><Text size={20}>{"'全费用综合单价报价表'"}</Text></Selected></tr>
              </tbody>
            </BandTable>
            <Scroll v at={1} len={15} />
          </BandRow>
          <BandScroll $inset><Scroll at={3} len={15} /></BandScroll>
        </Band>
        <Band>
          <BandRow $h={80}>
            <BandTable $pad={7}>
              <colgroup>
                <col width='140' /><col width='47' /><col width='85' /><col width='225' />
                <col width='38' /><col width='61' /><col width='66' /><col />
              </colgroup>
              <thead><tr height='21'><th><GreenArrow /></th><th /><th /><th /><th /><th /><th /><th /></tr></thead>
              <tbody>
                <tr height='22'>
                  <th rowSpan='2'><Text>所有分部 标题</Text></th>
                  <Ink rowSpan='2'><Text>'序号'</Text></Ink>
                  <Ink rowSpan='2'><Text>'项目编码'</Text></Ink>
                  <Ink rowSpan='2'><Text>{"\n'项目名称\n项目特征'"}</Text></Ink>
                  <Ink rowSpan='2'><Text>{"'计量\n单位'"}</Text></Ink>
                  <Ink rowSpan='2'><Text>{"'工程数量\n'"}</Text></Ink>
                  <Ink colSpan='2' $align='left' $pad={66}><Text>'金</Text></Ink>
                </tr>
                <tr height='22'><InkFirst><Text>'全费用</Text></InkFirst><Ink /></tr>
                <tr height='26'>
                  <RowHead>所有分部</RowHead>
                  <Ink /><Ink $valign='top' $top={4}><Text>[Code]</Text></Ink>
                  <Ink $align='left' $pad={2} $valign='top' $top={4}><Text>[Description]</Text></Ink>
                  <Ink /><Ink /><Ink /><Ink />
                </tr>
              </tbody>
            </BandTable>
            <Scroll v at={1} len={15} />
          </BandRow>
          <BandScroll $inset><Scroll at={3} len={15} /></BandScroll>
        </Band>
        <Band>
          <BandRow $h={86} $white>
            <PlainTable $pad={3}>
              <colgroup><col width='140' /><col width='320' /><col width='139' /><col /></colgroup>
              <thead><tr height='21'><th /><th /><th /><th /></tr></thead>
              <tbody><tr height='21'><th>页脚</th><td /><td /><td /></tr></tbody>
            </PlainTable>
          </BandRow>
          <Scroll at={3} len={15} />
        </Band>
      </Bands>

      <SplitRow><Handle><i /><i /></Handle></SplitRow>
      <Tabs>
        <Tab $w={76} $on>编辑表达式</Tab>
        <Tab $w={46}>数据源</Tab>
        <Tab $w={46}>字段</Tab>
      </Tabs>
      <TabPanel>
        <Editor>
          <EditorBody>
            <Gutter />
            <textarea aria-label='表达式' defaultValue={"'全费用综合单价报价表'"} />
            <Scroll v />
          </EditorBody>
          <BandScroll $inset><Scroll at={3} len={15} /></BandScroll>
        </Editor>
        <Handle $v><i /><i /></Handle>
        <Side>
          <Tab $w={52} $on>函数</Tab>
          <SidePanel>
            <Filter onSubmit={e => e.preventDefault()}>
              <label htmlFor='fn'>函数名称:</label>
              <input id='fn' />
              <button>过滤</button>
              <button>取消过滤</button>
            </Filter>
            <Lists>
              <ListBox $w={121}>
                <ListHead><span>函数分类</span></ListHead>
                <ul><li>数学函数</li><li>字符串函数</li></ul>
              </ListBox>
              <Handle $v><i /><i /></Handle>
              <ListBox><ListHead><span>函数名称</span><span>函数说明</span></ListHead></ListBox>
            </Lists>
          </SidePanel>
        </Side>
      </TabPanel>
      <Status>
        <StatusCell $left $w={178}><ClockIcon />报表标题设计</StatusCell>
        <StatusCell />
        <StatusCell $w={48}><KeysIcon /></StatusCell>
        <StatusCell $w={48}>-</StatusCell>
        <StatusCell $w={48}><Text>NUM</Text></StatusCell>
        <StatusCell $w={48}>覆盖</StatusCell>
        <StatusCell $w={49}>小写<SizeGrip /></StatusCell>
      </Status>
    </Client>
  </Window>
)

const FormLine = ({ name, on }) => {
  const id = React.useId()
  return (
    <FormRow>
      <Guide $w={8} /><Guide $w={19} /><Dash $w={10} />
      <Check type='checkbox' id={id} defaultChecked={on} />
      <FormIcon />
      <label htmlFor={id}><Text>{name}</Text></label>
    </FormRow>
  )
}

const FolderLine = ({ name, open }) => {
  const id = React.useId()
  return (
    <FormRow $folder>
      <Expander>
        <Icon w={7} h={6}>{open ? <path d='M6 0v6H0z' fill='#333' /> : <path d='M1 0l4 3-4 3z' stroke='#999' />}</Icon>
      </Expander>
      <Dash $w={3} />
      <Check type='checkbox' id={id} $partial={open} />
      <FolderIcon />
      <label htmlFor={id}>{name}</label>
    </FormRow>
  )
}

const shades = ['#c6c8c8', '#d2d2d2', '#c9c9c9', '#bfbfbf', '#c4c4c4', '#b9b9b9', '#cdcdcd', '#c1c1c1']
const tiles = []
for (let r = 0; r < 3; r += 1) {
  for (let c = 0; c < 8; c += 1) tiles.push([16 + c * 15, 19 + r * 15, shades[(c * 3 + r * 5) % 8]])
}

const FormsSidebar = () => (
  <Sidebar>
    <ProjectTree>
      <ProjectRow $pad={-1}><RootIcon /><span>设、·</span></ProjectRow>
      <ProjectRow $pad={15}><CubeIcon /></ProjectRow>
      <ProjectRow $pad={15}><CubeIcon /></ProjectRow>
      <ProjectRow $pad={15}><CubeIcon /></ProjectRow>
      <Mosaic width='206' height='66' aria-hidden='true'>
        <path d='M12 4h182l10 4-1 8-6 5H14L3 17l-1-7z' fill='#cfcfcf' />
        <path d='M76 6h30v15H76zM121 6h15v15h-15z' fill='#bcbcbc' />
        <path d='M5 18h11v5zM14 33h2v31h-2z' fill='#9cbcbc' />
        {tiles.map(([x, y, c]) => <rect key={`${x}-${y}`} x={x} y={y} width='15' height='15' fill={c} />)}
        <path d='M58 43l8-3-5 8z' fill='#fff' />
        <path d='M48 24h4M60 45l5-4M96 42h5M38 62l2-2' stroke='#000' />
      </Mosaic>
    </ProjectTree>
    <Scroll at={9} len={140} ribs />
    <SplitSide><Handle $h={8}><b /><u /><b /></Handle></SplitSide>
    <SideTools>
      <NewIcon />
      <Tool $text>新建</Tool>
      <Tool $text><DeleteIcon />删除</Tool>
      <Sep />
      <Tool aria-label='上移'><ArrowIcon turn={270} /></Tool>
      <Tool aria-label='下移'><ArrowIcon turn={90} /></Tool>
    </SideTools>
    <FormTree>
      <ul>
        {bidForms.map(([name, on]) => <FormLine key={name} name={name} on={on} />)}
        <FolderLine name='投标方' open />
        {bidderForms.map(([name, on], i) => <FormLine key={i} name={name} on={on} />)}
        <FolderLine name='招标控制价' />
      </ul>
      <Scroll v at={72} len={343} />
    </FormTree>
    <BandScroll $inset><Scroll at={0} len={152} ribs /></BandScroll>
    <FuncHead><ArrowIcon turn={90} />功能区</FuncHead>
    <FuncList>
      {['更多报表', '导出报表', '载入报表', '载入报表方案', '导出报表方案'].map(t => (
        <li key={t}><a href='#'><ArrowIcon />{t}</a></li>
      ))}
    </FuncList>
  </Sidebar>
)

const QuoteReport = () => (
  <Paper>
    <Corner />
    <Title>全费用综合单价报价表</Title>
    <SubLine>
      <span />
      <span>标段：一标段</span>
      <span><Text>第 1 页  共 3 页</Text></span>
    </SubLine>
    <Report>
      <colgroup>
        <col width='47' /><col width='85' /><col width='225' /><col width='38' />
        <col width='61' /><col width='66' /><col width='66' /><col />
      </colgroup>
      <thead>
        <tr height='22'>
          <th rowSpan='2'>序号</th>
          <th rowSpan='2'>项目编码</th>
          <th rowSpan='2'>{'项目名称\n项目特征'}</th>
          <th rowSpan='2'>{'计量\n单位'}</th>
          <th rowSpan='2'>工程数量</th>
          <th colSpan='3'>金额（元）</th>
        </tr>
        <tr height='35'><th>{'全费用\n综合单价'}</th><th>合价</th><th>备注</th></tr>
      </thead>
      <tbody>
        {reportRows.map(r => (
          <tr key={r.code} height={r.h}>
            <td><Text>{r.no}</Text></td>
            <td><Text>{r.code}</Text></td>
            <DescCell><Text>{r.desc}</Text></DescCell>
            <td><Text>{r.unit}</Text></td>
            {r.n.map(v => <NumCell key={v}><Text>{v}</Text></NumCell>)}
            <td />
          </tr>
        ))}
      </tbody>
    </Report>
  </Paper>
)

// arrow that widens from its tail to its head
const Taper = ({ from, to, width, head }) => {
  const len = Math.hypot(to[0] - from[0], to[1] - from[1])
  const ux = (to[0] - from[0]) / len
  const uy = (to[1] - from[1]) / len
  const neck = [to[0] - ux * head, to[1] - uy * head]
  const side = ([x, y], d) => `${x - uy * d},${y + ux * d}`
  const back = [to[0] - ux * (head + 3), to[1] - uy * (head + 3)]
  const pts = [
    side(from, 0.5), side(neck, width / 2), side(back, width), to.join(','),
    side(back, -width), side(neck, -width / 2), side(from, -0.5),
  ]
  return <polygon points={pts.join(' ')} fill='#fc3b39' />
}

const App = () => (
  <Page>
    <GlobalStyle />
    <TopBar>
      <ReplaceIcon />
      <Tool $text>统一替换<Caret $w={6} /></Tool>
      <Sep />
      <Tool $text><ExcelFileIcon />批量导出到Excel</Tool>
      <Sep />
      <Tool $text><PdfIcon />批量导出到PDF</Tool>
      <Sep />
      <Tool $text><PrintersIcon />批量打印</Tool>
      <Sep />
      <Tool $text><ApplyIcon />应用当前报表设置</Tool>
      <Sep />
      <Tool $text><CloseIcon />关闭</Tool>
    </TopBar>
    <Body>
      <FormsSidebar />
      <Main>
        <MainBar $h={29}>
          <Group>
            <Grip />
            <Tool $text><SimpleIcon />简便设计</Tool>
            <Tool $text><AdvancedIcon />高级设计</Tool>
            <Caret $w={10} />
            <Tool aria-label='打印'><PrinterIcon /></Tool>
            <Sep />
            <Tool aria-label='单页'><ViewIcon kind={1} /></Tool>
            <Tool aria-label='双页'><ViewIcon kind={2} /></Tool>
            <Tool aria-label='四页'><ViewIcon kind={4} /></Tool>
            <Sep />
            <Tool aria-label='首页'><NavIcon dir={-1} end off /></Tool>
            <Tool aria-label='上一页'><NavIcon dir={-1} off /></Tool>
            <Combo $w={34} $pad={5}><input aria-label='页码' defaultValue='1' /></Combo>
            <Tool aria-label='下一页'><NavIcon dir={1} /></Tool>
            <Tool aria-label='末页'><NavIcon dir={1} end /></Tool>
            <Sep />
            <Tool aria-label='放大'><LensIcon plus /></Tool>
            <Tool aria-label='缩小'><LensIcon /></Tool>
            <Tool $text>自适应列宽</Tool>
            <Combo $w={66} $pad={15}><input aria-label='缩放' defaultValue='100' /><Caret $w={14} /></Combo>
            <Sep />
            <Tool aria-label='导出Excel'><ExcelIcon kind={1} /></Tool>
            <Tool aria-label='导出多个'><ExcelIcon kind={2} /></Tool>
            <Tool aria-label='导出表格'><ExcelIcon kind={3} /></Tool>
            <Sep />
            <Tool $text>导出选项</Tool>
          </Group>
          <Group>
            <Grip />
            <Check type='checkbox' id='paging' defaultChecked />
            <PagingLabel htmlFor='paging'><Text>按Excel分页</Text></PagingLabel>
          </Group>
        </MainBar>
        <Canvas><QuoteReport /></Canvas>
      </Main>
    </Body>
    <ReportDesigner />
    <Marks width='1000' height='560' aria-hidden='true'>
      <ellipse cx='383' cy='40' rx='101' ry='36' stroke='#f31bf3' strokeWidth='7' fill='none' />
      <Taper from={[110, 531]} to={[370, 45]} width={9} head={16} />
      <Taper from={[371, 46]} to={[307, 95]} width={9} head={16} />
      <Taper from={[309, 96]} to={[630, 269]} width={10} head={16} />
      <Taper from={[630, 269]} to={[984, 212]} width={8} head={15} />
    </Marks>
  </Page>
)

export default App
